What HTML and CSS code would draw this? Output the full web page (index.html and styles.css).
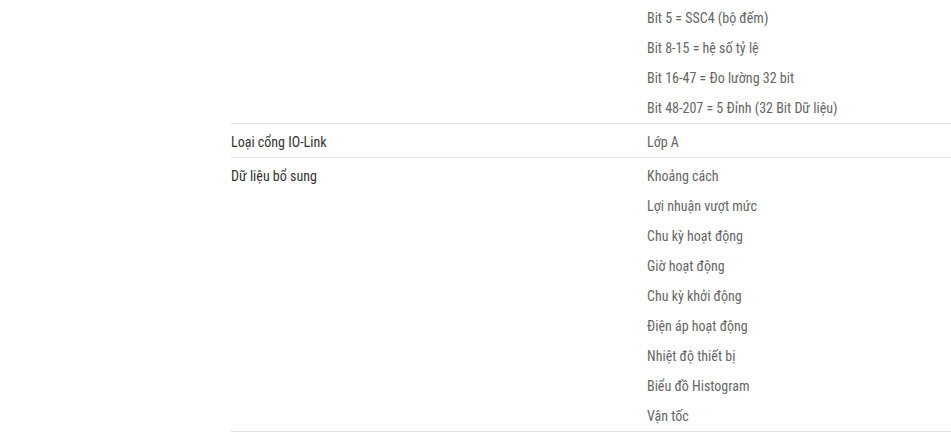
FILE: index.html
```html
<!DOCTYPE html>
<html lang="vi">
<head>
<meta charset="utf-8">
<link rel="stylesheet" href="styles.css">
</head>
<body>
<div class="specs">
  <div class="row">
    <div class="label"></div>
    <ul class="values">
      <li>Bit 5 = SSC4 (bộ đếm)</li>
      <li>Bit 8-15 = hệ số tỷ lệ</li>
      <li>Bit 16-47 = Đo lường 32 bit</li>
      <li>Bit 48-207 = 5 Đỉnh (32 Bit Dữ liệu)</li>
    </ul>
  </div>
  <div class="row">
    <div class="label">Loại cổng IO-Link</div>
    <ul class="values">
      <li>Lớp A</li>
    </ul>
  </div>
  <div class="row">
    <div class="label">Dữ liệu bổ sung</div>
    <ul class="values">
      <li>Khoảng cách</li>
      <li>Lợi nhuận vượt mức</li>
      <li>Chu kỳ hoạt động</li>
      <li>Giờ hoạt động</li>
      <li>Chu kỳ khởi động</li>
      <li>Điện áp hoạt động</li>
      <li>Nhiệt độ thiết bị</li>
      <li>Biểu đồ Histogram</li>
      <li>Vận tốc</li>
    </ul>
  </div>
</div>
</body>
</html>
```
FILE: styles.css
```css
html, body {
  margin: 0;
  padding: 0;
  background: #fff;
  overflow: hidden;
}
body {
  font-family: Roboto, "Noto Sans", sans-serif;
  font-size: 14px;
  font-stretch: 87.5%;
  line-height: 30px;
}
.specs {
  margin-left: 231px;
  width: 760px;
}
.row {
  display: grid;
  grid-template-columns: 416px 1fr;
  padding-top: 3px;
  border-bottom: 1px solid #e3e3e3;
}
.label {
  color: #333;
}
.values {
  list-style: none;
  margin: 0;
  padding: 0;
  color: #666;
}
```
